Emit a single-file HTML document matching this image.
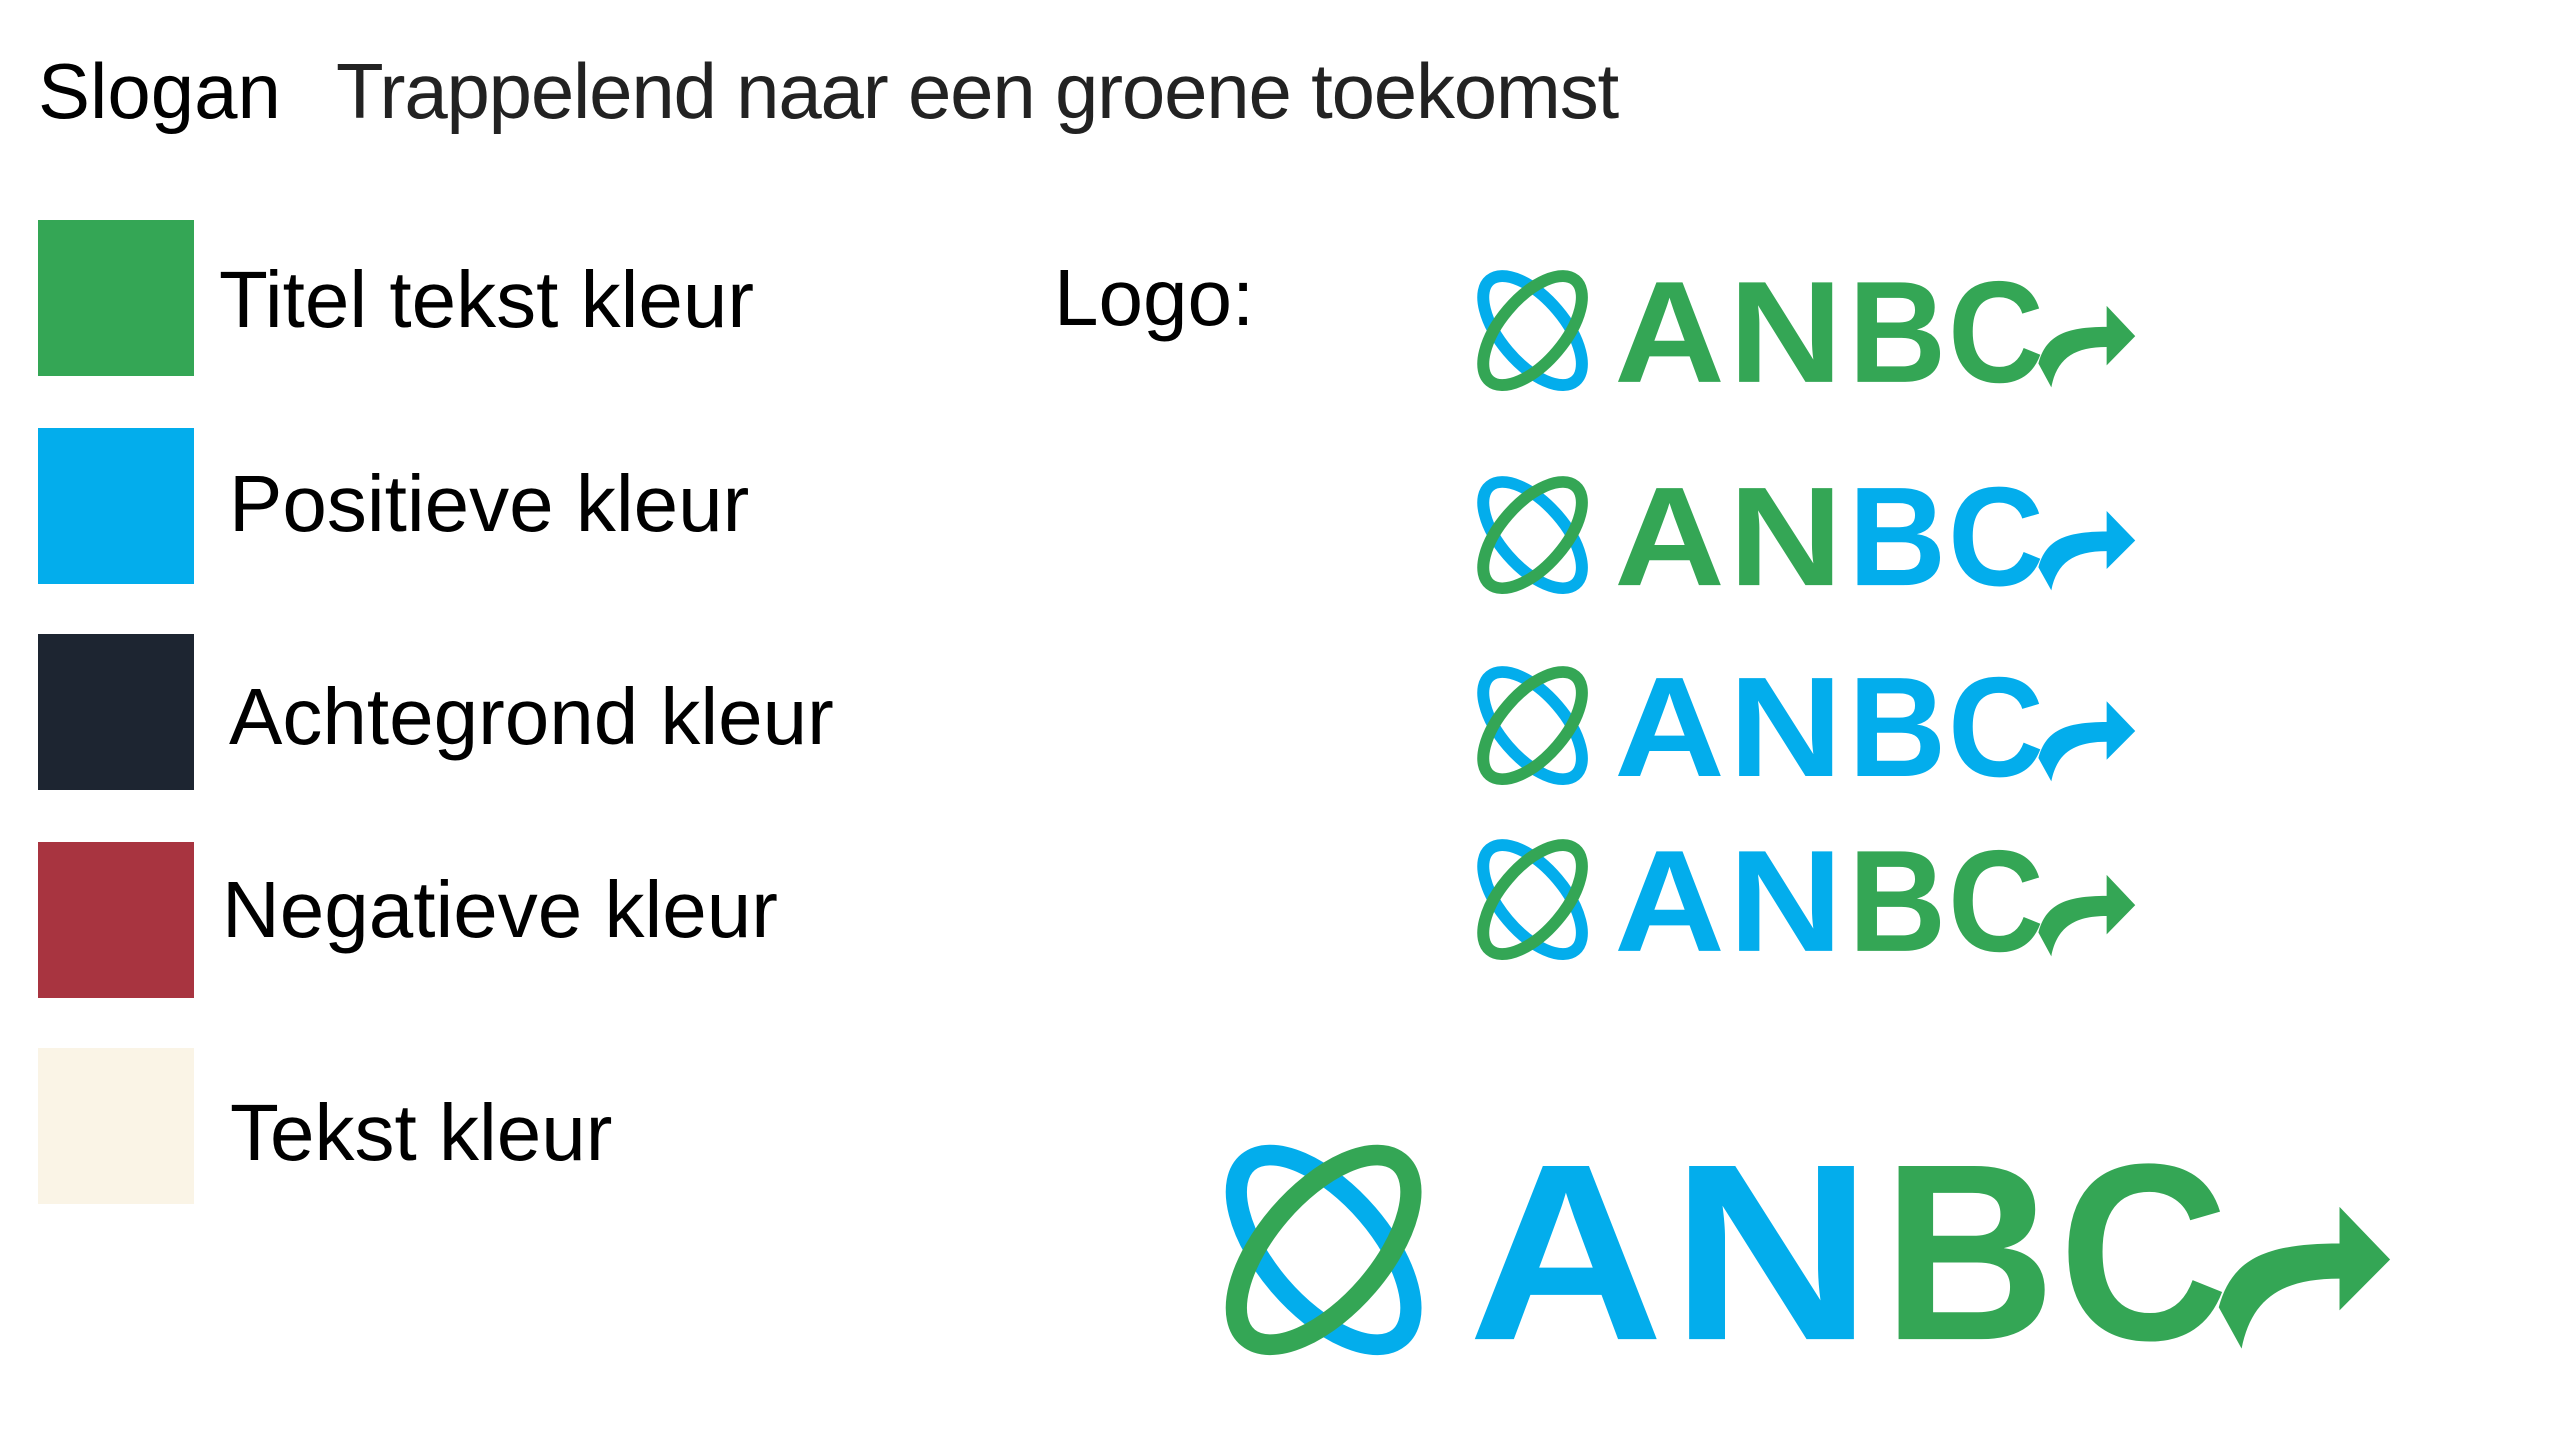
<!DOCTYPE html>
<html><head><meta charset="utf-8"><style>
html,body{margin:0;padding:0;background:#fff;width:2560px;height:1440px;overflow:hidden;position:relative;font-family:"Liberation Sans",sans-serif;color:#000}
.t{position:absolute;white-space:nowrap;font-size:80px;line-height:1}
.sw{position:absolute;left:38px;width:156px;height:156px}
svg.logo{position:absolute;overflow:visible}
</style></head><body>
<div class="t" style="left:38px;top:52px;font-size:78px">Slogan</div>
<div class="t" style="left:336px;top:52px;font-size:78px;color:#222;letter-spacing:-1.2px">Trappelend naar een groene toekomst</div>

<div class="sw" style="top:220px;background:#34A655"></div>
<div class="sw" style="top:428px;background:#03ADEC"></div>
<div class="sw" style="top:634px;background:#1D2531"></div>
<div class="sw" style="top:842px;background:#A83440"></div>
<div class="sw" style="top:1048px;background:#FAF4E6"></div>

<div class="t" style="left:219px;top:260px">Titel tekst kleur</div>
<div class="t" style="left:229px;top:464px">Positieve kleur</div>
<div class="t" style="left:229px;top:677px">Achtegrond kleur</div>
<div class="t" style="left:222px;top:870px">Negatieve kleur</div>
<div class="t" style="left:230px;top:1093px">Tekst kleur</div>
<div class="t" style="left:1054px;top:258px">Logo:</div>

<svg width="0" height="0" style="position:absolute">
<defs>
<g id="icon">
<ellipse cx="63.5" cy="64" rx="35" ry="72" transform="rotate(-40 63.5 64)" fill="none" stroke="#03ADEC" stroke-width="13"/>
<ellipse cx="63.5" cy="64" rx="35" ry="72" transform="rotate(40 63.5 64)" fill="none" stroke="#34A655" stroke-width="13"/>
</g>
</defs>
</svg>

<svg class="logo" style="left:1474px;top:272px;width:664px;height:119px" viewBox="0 0 720 130" preserveAspectRatio="none">
<use href="#icon"/>
<g font-family="Liberation Sans" font-weight="bold" font-size="158" fill="#34A655">
<text x="152" y="120" textLength="120" lengthAdjust="spacingAndGlyphs">A</text>
<text x="276" y="120" textLength="124" lengthAdjust="spacingAndGlyphs">N</text>
<text x="406" y="120" textLength="106" lengthAdjust="spacingAndGlyphs">B</text>
<text x="514" y="120" textLength="104" lengthAdjust="spacingAndGlyphs">C</text>
<path d="M612 100 C620 70 640 60 686 60 L686 37 L717 70 L686 102 L686 82 C650 82 632 95 626 126 Z"/>
</g></svg>

<svg class="logo" style="left:1474px;top:478px;width:664px;height:116px" viewBox="0 0 720 130" preserveAspectRatio="none">
<use href="#icon"/>
<g font-family="Liberation Sans" font-weight="bold" font-size="158" fill="#34A655">
<text x="152" y="120" textLength="120" lengthAdjust="spacingAndGlyphs">A</text>
<text x="276" y="120" textLength="124" lengthAdjust="spacingAndGlyphs">N</text></g>
<g font-family="Liberation Sans" font-weight="bold" font-size="158" fill="#03ADEC">
<text x="406" y="120" textLength="106" lengthAdjust="spacingAndGlyphs">B</text>
<text x="514" y="120" textLength="104" lengthAdjust="spacingAndGlyphs">C</text>
<path d="M612 100 C620 70 640 60 686 60 L686 37 L717 70 L686 102 L686 82 C650 82 632 95 626 126 Z"/>
</g></svg>

<svg class="logo" style="left:1474px;top:668px;width:664px;height:117px" viewBox="0 0 720 130" preserveAspectRatio="none">
<use href="#icon"/>
<g font-family="Liberation Sans" font-weight="bold" font-size="158" fill="#03ADEC">
<text x="152" y="120" textLength="120" lengthAdjust="spacingAndGlyphs">A</text>
<text x="276" y="120" textLength="124" lengthAdjust="spacingAndGlyphs">N</text>
<text x="406" y="120" textLength="106" lengthAdjust="spacingAndGlyphs">B</text>
<text x="514" y="120" textLength="104" lengthAdjust="spacingAndGlyphs">C</text>
<path d="M612 100 C620 70 640 60 686 60 L686 37 L717 70 L686 102 L686 82 C650 82 632 95 626 126 Z"/>
</g></svg>

<svg class="logo" style="left:1474px;top:841px;width:664px;height:119px" viewBox="0 0 720 130" preserveAspectRatio="none">
<use href="#icon"/>
<g font-family="Liberation Sans" font-weight="bold" font-size="158" fill="#03ADEC">
<text x="152" y="120" textLength="120" lengthAdjust="spacingAndGlyphs">A</text>
<text x="276" y="120" textLength="124" lengthAdjust="spacingAndGlyphs">N</text></g>
<g font-family="Liberation Sans" font-weight="bold" font-size="158" fill="#34A655">
<text x="406" y="120" textLength="106" lengthAdjust="spacingAndGlyphs">B</text>
<text x="514" y="120" textLength="104" lengthAdjust="spacingAndGlyphs">C</text>
<path d="M612 100 C620 70 640 60 686 60 L686 37 L717 70 L686 102 L686 82 C650 82 632 95 626 126 Z"/>
</g></svg>

<svg class="logo" style="left:1220px;top:1148px;width:1175px;height:207px" viewBox="0 0 720 130" preserveAspectRatio="none">
<use href="#icon"/>
<g font-family="Liberation Sans" font-weight="bold" font-size="158" fill="#03ADEC">
<text x="152" y="120" textLength="120" lengthAdjust="spacingAndGlyphs">A</text>
<text x="276" y="120" textLength="124" lengthAdjust="spacingAndGlyphs">N</text></g>
<g font-family="Liberation Sans" font-weight="bold" font-size="158" fill="#34A655">
<text x="406" y="120" textLength="106" lengthAdjust="spacingAndGlyphs">B</text>
<text x="514" y="120" textLength="104" lengthAdjust="spacingAndGlyphs">C</text>
<path d="M612 100 C620 70 640 60 686 60 L686 37 L717 70 L686 102 L686 82 C650 82 632 95 626 126 Z"/>
</g></svg>
</body></html>
